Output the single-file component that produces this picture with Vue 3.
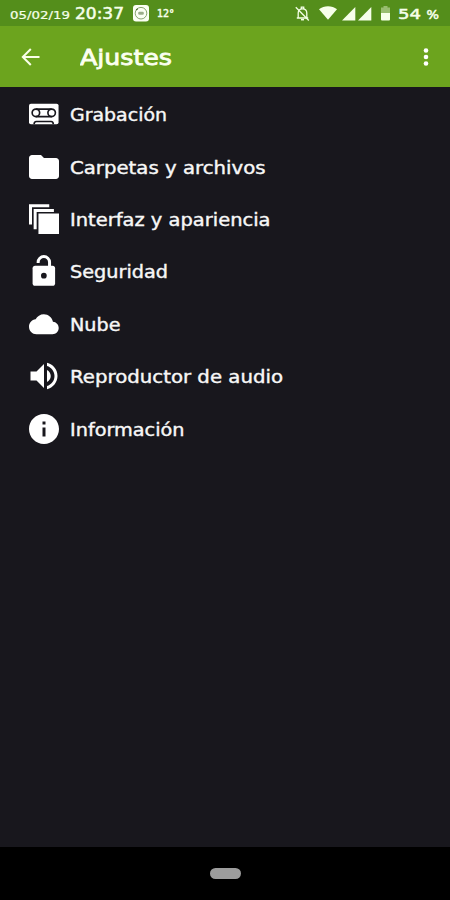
<script setup>
const items = [
  { label: 'Grabación', icon: 'tape', width: 97 },
  { label: 'Carpetas y archivos', icon: 'folder', width: 195.5 },
  { label: 'Interfaz y apariencia', icon: 'layers', width: 200.5 },
  { label: 'Seguridad', icon: 'lock', width: 98 },
  { label: 'Nube', icon: 'cloud', width: 50.5 },
  { label: 'Reproductor de audio', icon: 'volume', width: 213 },
  { label: 'Información', icon: 'info', width: 114.5 }
]
</script>

<template>
  <div class="screen">
    <header class="status">
      <svg class="date" width="60" height="26"><text x="0" y="18.5" textLength="60" lengthAdjust="spacingAndGlyphs">05/02/19</text></svg>
      <svg class="clock" width="50" height="26"><text x="0" y="19" textLength="49" lengthAdjust="spacingAndGlyphs">20:37</text></svg>
      <svg class="badge" width="16" height="17" viewBox="0 0 16 17">
        <rect width="16" height="16.5" rx="3" fill="#fbfff4" />
        <circle cx="8" cy="8.2" r="5.8" fill="none" stroke="#7c9a62" stroke-width=".9" />
        <path d="M3.2 5.1l1.5-1.5" stroke="#416126" stroke-width="1.2" />
        <rect x="5.2" y="6.8" width="5.6" height="3" rx="1.3" fill="#9aad89" />
      </svg>
      <svg class="temp" width="18" height="26"><text x="0" y="17.2" textLength="17" lengthAdjust="spacingAndGlyphs">12°</text></svg>
      <span class="spacer"></span>
      <svg class="bell" width="15" height="16" viewBox="0 0 15 16" fill="none" stroke="#f4ffe6" stroke-width="1.3">
        <path d="M3.2 12V7c0-2.3 1.6-4.2 4.3-4.2S11.8 4.7 11.8 7v5M1.8 12h11.4M6.3 2.5V1.2h2.4v1.3" />
        <path d="M6 13.7h3" stroke-width="1.5" />
        <path d="M.8 1.2l13 13.3" />
      </svg>
      <svg class="wifi" width="18" height="14" viewBox="0 0 18 14"><path d="M0 3.3C5-.8 13-.8 18 3.3L9 13.8z" /></svg>
      <svg class="signal" width="14" height="14" viewBox="0 0 14 14"><path d="M13.3 0v13.5H0z" /></svg>
      <svg class="signal second" width="14" height="14" viewBox="0 0 14 14"><path d="M13.3 0v13.5H0z" /></svg>
      <svg class="battery" width="9" height="15" viewBox="0 0 9 15">
        <path class="empty" d="M2.5 0h4v1.5H9V7H0V1.5h2.5z" />
        <path d="M0 7h9v6.5a1 1 0 0 1-1 1H1a1 1 0 0 1-1-1z" />
      </svg>
      <svg class="percent" width="43" height="26">
        <text x="0" y="18.5" textLength="23" lengthAdjust="spacingAndGlyphs">54</text>
        <text class="sign" x="28.5" y="18.5" textLength="12.5" lengthAdjust="spacingAndGlyphs">%</text>
      </svg>
    </header>

    <nav class="bar">
      <svg class="back" width="20" height="18" viewBox="0 0 20 18"><path d="M18.5 9H2M9.8 1L1.8 9l8 8" /></svg>
      <svg class="title" width="95" height="60"><text x="0" y="38" textLength="92" lengthAdjust="spacingAndGlyphs">Ajustes</text></svg>
      <span class="spacer"></span>
      <svg class="more" width="6" height="20" viewBox="0 0 6 20">
        <circle cx="3" cy="3.5" r="2.3" /><circle cx="3" cy="10" r="2.3" /><circle cx="3" cy="16.5" r="2.3" />
      </svg>
    </nav>

    <main class="list">
      <div v-for="item in items" :key="item.icon" class="row">
        <svg class="icon" width="36" height="36" viewBox="0 0 24 24">
          <g v-if="item.icon === 'tape'">
            <rect x="2" y="5.1" width="19.7" height="13.7" rx="1.3" />
            <g class="cut">
              <circle cx="6.6" cy="11.2" r="2.5" /><circle cx="17.1" cy="11.2" r="2.5" />
              <path d="M6.6 8.7h10.5M6.6 13.7h10.5M5.4 18.8c0-1 .6-1.8 1.5-1.8h9.8c.9 0 1.5.8 1.5 1.8" />
            </g>
          </g>
          <path v-else-if="item.icon === 'folder'" d="M10 4H4c-1.100 0-2 .9-2 2v12c0 1.100.9 2 2 2h16c1.100 0 2-.9 2-2V8c0-1.100-.9-2-2-2h-8z" />
          <path v-else-if="item.icon === 'layers'" d="M2 2.200h13.500v2H4v11.500H2zM5.100 5.300h13.500v2H7.100v11.500h-2zM8.300 8.400H22V22H8.300z" />
          <g v-else-if="item.icon === 'lock'">
            <path class="shackle" d="M8.100 6.700V6.200a3.800 3.800 0 0 1 7.600 0V9.500" />
            <rect x="4.400" y="8.500" width="15" height="13.400" rx="1.700" />
            <circle class="hole" cx="11.900" cy="15.100" r="1.900" />
          </g>
          <path v-else-if="item.icon === 'cloud'" transform="translate(2 2.100) scale(.825 .833)" d="M19.350 10.040C18.670 6.590 15.640 4 12 4 9.110 4 6.600 5.640 5.350 8.040 2.340 8.360 0 10.910 0 14c0 3.310 2.690 6 6 6h13c2.760 0 5-2.240 5-5 0-2.640-2.050-4.780-4.650-4.960z" />
          <path v-else-if="item.icon === 'volume'" d="M3 9v6h4l5 5V4L7 9H3zm13.500 3c0-1.770-1.020-3.290-2.500-4.030v8.050c1.480-.73 2.500-2.250 2.500-4.020zM14 3.230v2.060c2.890.86 5 3.540 5 6.710s-2.110 5.850-5 6.710v2.060c4.010-.91 7-4.490 7-8.770s-2.990-7.860-7-8.770z" />
          <path v-else d="M12 2C6.480 2 2 6.480 2 12s4.480 10 10 10 10-4.480 10-10S17.520 2 12 2zm1 15h-2v-6h2v6zm0-8h-2V7h2v2z" />
        </svg>
        <svg class="label" :width="item.width + 2" height="32">
          <text x="0" y="22.6" :textLength="item.width" lengthAdjust="spacingAndGlyphs">{{ item.label }}</text>
        </svg>
      </div>
    </main>

    <footer class="nav"><span class="pill"></span></footer>
  </div>
</template>

<style>
body { margin: 0; background: #18171d; }
</style>

<style scoped>
.screen {
  width: 450px; height: 900px; display: flex; flex-direction: column; overflow: hidden;
  background: #18171d; font-family: "DejaVu Sans", sans-serif;
}
svg { display: block; flex: none; fill: #fff; }
.spacer { flex: 1; }
.status {
  height: 26px; flex: none; box-sizing: border-box; display: flex; align-items: center;
  padding: 0 10px; background: #548e1b;
}
.status svg { fill: #f6ffea; }
.status .bell { fill: none; margin: 2px 9px 0 0; }
.status text { stroke: #f6ffea; stroke-width: .2px; }
.date { font-size: 10.5px; }
.clock { font-size: 15px; margin-left: 5px; }
.status .clock text, .status .percent text { stroke-width: .5px; }
.badge { margin-left: 8px; }
.temp { font-size: 10.5px; margin-left: 8px; }
.status .temp text { stroke-width: .5px; }
.wifi { margin-right: 5px; }
.signal { margin-top: 1px; }
.second { margin-left: 2px; }
.battery { margin: 1px 8px 0 9px; }
.empty { fill: #98bd70; }
.percent { font-size: 14.5px; margin-right: -1px; }
.sign { font-size: 12.5px; }
.bar {
  height: 61px; flex: none; box-sizing: border-box; display: flex; align-items: center;
  padding: 0 21px; background: #6ca41e;
}
.back { fill: none; stroke: #faffe9; stroke-width: 2; }
.title { margin-left: 39px; font-size: 21.5px; }
.title text { fill: #fbfff0; stroke: #fbfff0; stroke-width: .8px; }
.list { flex: 1; padding-top: .9px; }
.row { height: 52.45px; display: flex; align-items: center; padding-left: 26px; }
.icon { margin-right: 8px; }
.cut { fill: none; stroke: #18171d; stroke-width: 1.1; }
.shackle { fill: none; stroke: #fff; stroke-width: 2; }
.hole { fill: #18171d; }
.label { font-size: 17px; }
.label text { fill: #f7f7f7; stroke: #f7f7f7; stroke-width: .4px; }
.nav { height: 53px; flex: none; display: flex; justify-content: center; align-items: center; background: #000; }
.pill { width: 31px; height: 11px; border-radius: 6px; background: #9d9d9d; }
</style>
